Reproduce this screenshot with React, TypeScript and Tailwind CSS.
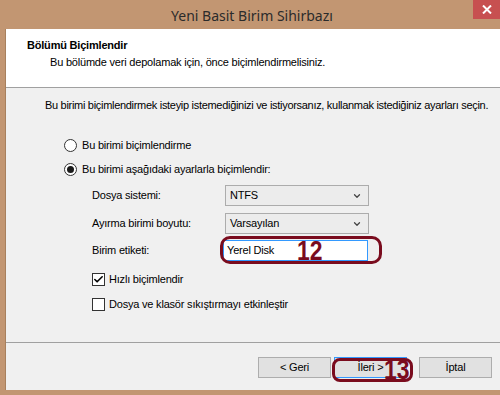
import { Check, ChevronDown } from 'lucide-react';

const ui = { fontFamily: '"Liberation Sans", Arial, sans-serif' };
const mark = { fontFamily: '"Liberation Sans", Arial, sans-serif' };

function Radio({ checked, label }: { checked?: boolean; label: string }) {
  return (
    <div className="flex items-center h-[13px] gap-[5px]">
      <span className="w-[13px] h-[13px] rounded-full border border-[#333] bg-white flex items-center justify-center">
        {checked && <span className="w-[7px] h-[7px] rounded-full bg-[#1a1a1a]" />}
      </span>
      <span>{label}</span>
    </div>
  );
}

function Box({ checked, label }: { checked?: boolean; label: string }) {
  return (
    <div className="flex items-center h-[13px] gap-[4px]">
      <span className="w-[13px] h-[13px] border border-[#333] bg-white flex items-center justify-center">
        {checked && <Check className="w-[11px] h-[11px] text-black" strokeWidth={3.5} />}
      </span>
      <span>{label}</span>
    </div>
  );
}

function Combo({ value }: { value: string }) {
  return (
    <div className="w-[144px] h-[21px] border border-[#acacac] bg-[#ececec] flex items-center justify-between pl-[4px] pr-[6px]">
      <span>{value}</span>
      <ChevronDown className="w-[10px] h-[10px] text-[#444]" strokeWidth={3} />
    </div>
  );
}

function Btn({ label, primary }: { label: string; primary?: boolean }) {
  return (
    <div
      className={`w-[73px] h-[21px] flex items-center justify-center bg-[#e1e1e1] border ${
        primary ? 'border-[#3399ff]' : 'border-[#adadad]'
      }`}
    >
      {label}
    </div>
  );
}

export default function App() {
  return (
    <div
      className="w-[500px] h-[395px] bg-[#c29672] flex flex-col text-[11px] tracking-[-0.2px] text-black overflow-hidden"
      style={ui}
    >
      <div className="h-[29px] shrink-0 relative flex items-center justify-center">
        <span className="text-[14px] tracking-normal text-[#2b2b2b] pt-[1px] pl-[4px]" style={{ fontFamily: '"Noto Sans", sans-serif' }}>
          Yeni Basit Birim Sihirbazı
        </span>
        <div className="absolute right-0 top-0 w-[27px] h-[19px] bg-[#c75050] flex items-center justify-center">
          <svg width="10" height="9" viewBox="0 0 10 9">
            <path d="M1 0.5 L9 8.5 M9 0.5 L1 8.5" stroke="white" strokeWidth="2" />
          </svg>
        </div>
      </div>

      <div className="ml-[5px] h-[361px] border-l border-[#a8805d] flex flex-col">
        <div className="h-[59px] shrink-0 bg-white border-b border-[#a0a0a0] pl-[21px] pt-[9px]">
          <div className="font-bold leading-[15px]">Bölümü Biçimlendir</div>
          <div className="pl-[23px] mt-[2px] leading-[15px]">Bu bölümde veri depolamak için, önce biçimlendirmelisiniz.</div>
        </div>

        <div className="h-[255px] shrink-0 bg-[#f0f0f0] border-b border-[#a0a0a0] pl-[39px] pt-[10px] relative">
          <div className="leading-[15px] whitespace-nowrap tracking-[-0.3px]">
            Bu birimi biçimlendirmek isteyip istemediğinizi ve istiyorsanız, kullanmak istediğiniz ayarları seçin.
          </div>
          <div className="pl-[19px] mt-[26px] flex flex-col gap-[11px]">
            <Radio label="Bu birimi biçimlendirme" />
            <Radio checked label="Bu birimi aşağıdaki ayarlarla biçimlendir:" />
          </div>
          <div className="pl-[47px] mt-[9px] flex flex-col">
            <div className="flex items-center h-[21px]">
              <span className="w-[133px]">Dosya sistemi:</span>
              <Combo value="NTFS" />
            </div>
            <div className="flex items-center h-[21px] mt-[7px]">
              <span className="w-[133px]">Ayırma birimi boyutu:</span>
              <Combo value="Varsayılan" />
            </div>
            <div className="flex items-center h-[21px] mt-[6px]">
              <span className="w-[131px]">Birim etiketi:</span>
              <div className="w-[145px] h-[21px] bg-white border border-[#3399ff] pl-[3px] flex items-center">Yerel Disk</div>
            </div>
            <div className="mt-[12px] flex flex-col gap-[12px]">
              <Box checked label="Hızlı biçimlendir" />
              <Box label="Dosya ve klasör sıkıştırmayı etkinleştir" />
            </div>
          </div>

          <div className="absolute left-[214px] top-[148px] w-[162px] h-[28px] border-[3px] border-[#7a0c1e] rounded-[10px]" />
          <div
            className="absolute left-[291px] top-[150px] text-[27px] font-bold tracking-normal text-[#7a0c1e] leading-[26px] scale-x-[0.85] origin-left"
            style={mark}
          >
            12
          </div>
        </div>

        <div className="flex-1 bg-[#f0f0f0] flex justify-end items-start pt-[14px] pr-[8px] relative">
          <div className="flex">
            <Btn label="< Geri" />
            <div className="ml-[3px]">
              <Btn primary label="İleri >" />
            </div>
            <div className="ml-[12px]">
              <Btn label="İptal" />
            </div>
          </div>
          <div className="absolute left-[326px] top-[15px] w-[81px] h-[24px] border-[3px] border-[#7a0c1e] rounded-[8px]" />
          <div
            className="absolute left-[378px] top-[14px] text-[27px] font-bold tracking-normal text-[#7a0c1e] leading-[26px] scale-x-[0.85] origin-left"
            style={mark}
          >
            13
          </div>
        </div>
      </div>
    </div>
  );
}
